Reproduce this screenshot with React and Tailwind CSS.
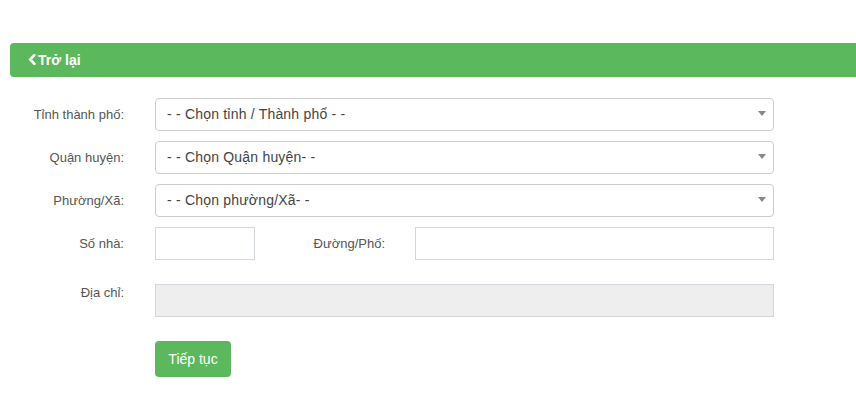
// Select-like box with a small caret on the right
function FakeSelect({ placeholder }) {
  return (
    <div className="relative flex h-[33px] w-[619px] items-center rounded-[4px] border border-[#cccccc] bg-white pl-[11px] text-[14px] tracking-[0.2px] text-[#444444]">
      <span>{placeholder}</span>
      <span className="absolute right-[7px] top-[12px] h-0 w-0 border-x-[4px] border-t-[5px] border-x-transparent border-t-[#888888]" />
    </div>
  );
}

function Row({ label, children, alignTop }) {
  return (
    <div className={`flex ${alignTop ? "items-start" : "items-center"}`}>
      <label
        className={`w-[124px] text-right text-[13px] text-[#555555] ${
          alignTop ? "leading-[17px]" : ""
        }`}
      >
        {label}
      </label>
      <div className="ml-[31px]">{children}</div>
    </div>
  );
}

export default function App() {
  return (
    <div
      className="min-h-[409px] w-[856px] overflow-hidden bg-white pt-[43px]"
      style={{ fontFamily: '"Liberation Sans", Arial, sans-serif' }}
    >
      {/* header bar */}
      <div className="ml-[10px] flex h-[34px] items-center rounded-l-[4px] bg-[#5cb85c] pl-[18px] text-white">
        <svg width="8" height="11" viewBox="0 0 8 11" className="mb-[1px]">
          <path
            d="M6.3 1.2 L2.2 5.5 L6.3 9.8"
            fill="none"
            stroke="white"
            strokeWidth="2.6"
            strokeLinecap="square"
          />
        </svg>
        <span className="ml-[2px] text-[14px] font-bold">Trở lại</span>
      </div>

      <div className="mt-[21px] flex flex-col">
        <Row label="Tỉnh thành phố:">
          <FakeSelect placeholder="- - Chọn tỉnh / Thành phố - -" />
        </Row>
        <div className="mt-[10px]">
          <Row label="Quận huyện:">
            <FakeSelect placeholder="- - Chọn Quận huyện- -" />
          </Row>
        </div>
        <div className="mt-[10px]">
          <Row label="Phường/Xã:">
            <FakeSelect placeholder="- - Chọn phường/Xã- -" />
          </Row>
        </div>

        <div className="mt-[10px]">
          <Row label="Số nhà:">
            <div className="flex items-center">
              <input className="h-[33px] w-[100px] border border-[#d2d6de] bg-white outline-none" />
              <label className="w-[130px] text-right text-[13px] text-[#555555]">
                Đường/Phố:
              </label>
              <input className="ml-[30px] h-[33px] w-[359px] border border-[#d2d6de] bg-white outline-none" />
            </div>
          </Row>
        </div>

        <div className="mt-[24px]">
          <Row label="Địa chỉ:" alignTop>
            <div className="h-[33px] w-[619px] border border-[#d2d6de] bg-[#eeeeee]" />
          </Row>
        </div>

        <div className="ml-[155px] mt-[24px]">
          <button className="h-[36px] w-[76px] rounded-[4px] bg-[#5cb85c] text-[14px] text-white">
            Tiếp tục
          </button>
        </div>
      </div>
    </div>
  );
}
